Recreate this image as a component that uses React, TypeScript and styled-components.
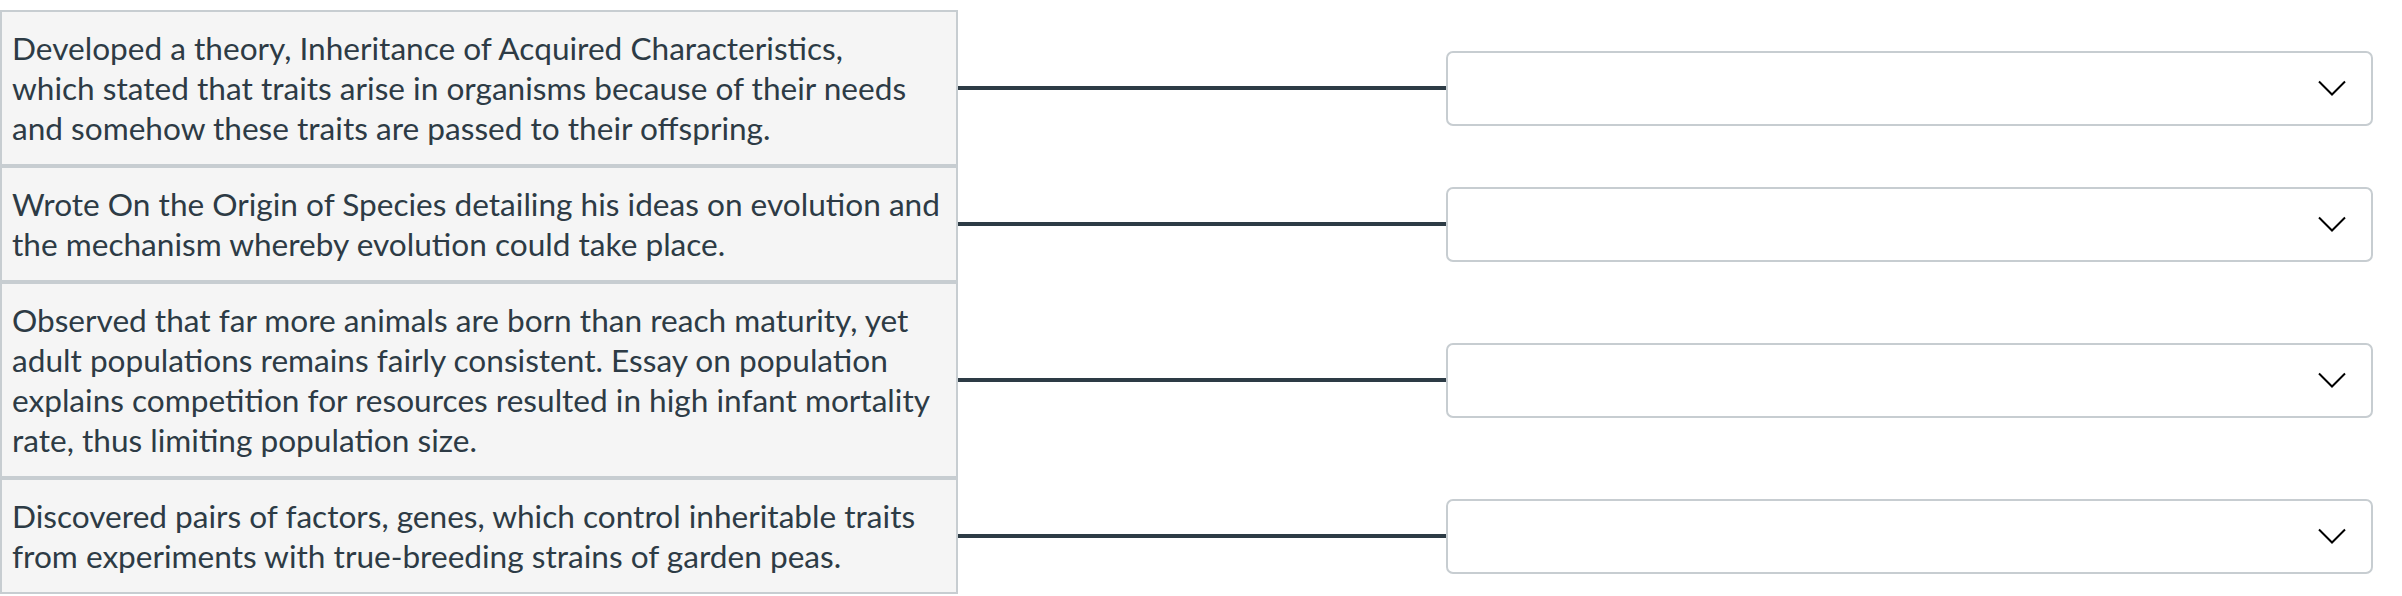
import React from "react";
import styled, { createGlobalStyle } from "styled-components";

const GlobalStyle = createGlobalStyle`
  html, body {
    margin: 0;
    padding: 0;
    background: #ffffff;
  }
  body {
    font-family: Lato, "Noto Sans", sans-serif;
    color: #2d3b45;
  }
`;

const Page = styled.div`
  padding: 10px 29px 0 0;
  display: flex;
  flex-direction: column;
`;

const Row = styled.div`
  display: flex;
  align-items: center;
`;

const Prompt = styled.div`
  box-sizing: border-box;
  width: 958px;
  flex: 0 0 958px;
  align-self: stretch;
  background: #f5f5f5;
  border: 2px solid #c7cdd1;
  padding: 16px 10px;
  font-size: 31.6px;
  line-height: 40px;
  color: #2d3b45;
`;

const Line = styled.span`
  display: block;
  white-space: nowrap;
`;

const Connector = styled.div`
  flex: 1 1 auto;
  height: 4px;
  background: #2d3b45;
`;

const SelectBox = styled.div`
  box-sizing: border-box;
  flex: 0 0 927px;
  width: 927px;
  height: 75px;
  border: 2px solid #c7cdd1;
  border-radius: 7px;
  background: #ffffff;
  display: flex;
  align-items: center;
  justify-content: flex-end;
  padding-right: 25px;
`;

const Chevron = () => (
  <svg width="28" height="16" viewBox="0 0 28 16" aria-hidden="true">
    <polyline
      points="1,1.5 14,14.5 27,1.5"
      fill="none"
      stroke="#000"
      strokeWidth="2"
    />
  </svg>
);

const items: string[][] = [
  [
    "Developed a theory, Inheritance of Acquired Characteristics,",
    "which stated that traits arise in organisms because of their needs",
    "and somehow these traits are passed to their offspring.",
  ],
  [
    "Wrote On the Origin of Species detailing his ideas on evolution and",
    "the mechanism whereby evolution could take place.",
  ],
  [
    "Observed that far more animals are born than reach maturity, yet",
    "adult populations remains fairly consistent. Essay on population",
    "explains competition for resources resulted in high infant mortality",
    "rate, thus limiting population size.",
  ],
  [
    "Discovered pairs of factors, genes, which control inheritable traits",
    "from experiments with true-breeding strains of garden peas.",
  ],
];

export default function App() {
  return (
    <>
      <GlobalStyle />
      <Page>
        {items.map((lines, i) => (
          <Row key={i}>
            <Prompt>
              {lines.map((l, j) => (
                <Line key={j}>{l}</Line>
              ))}
            </Prompt>
            <Connector />
            <SelectBox>
              <Chevron />
            </SelectBox>
          </Row>
        ))}
      </Page>
    </>
  );
}
